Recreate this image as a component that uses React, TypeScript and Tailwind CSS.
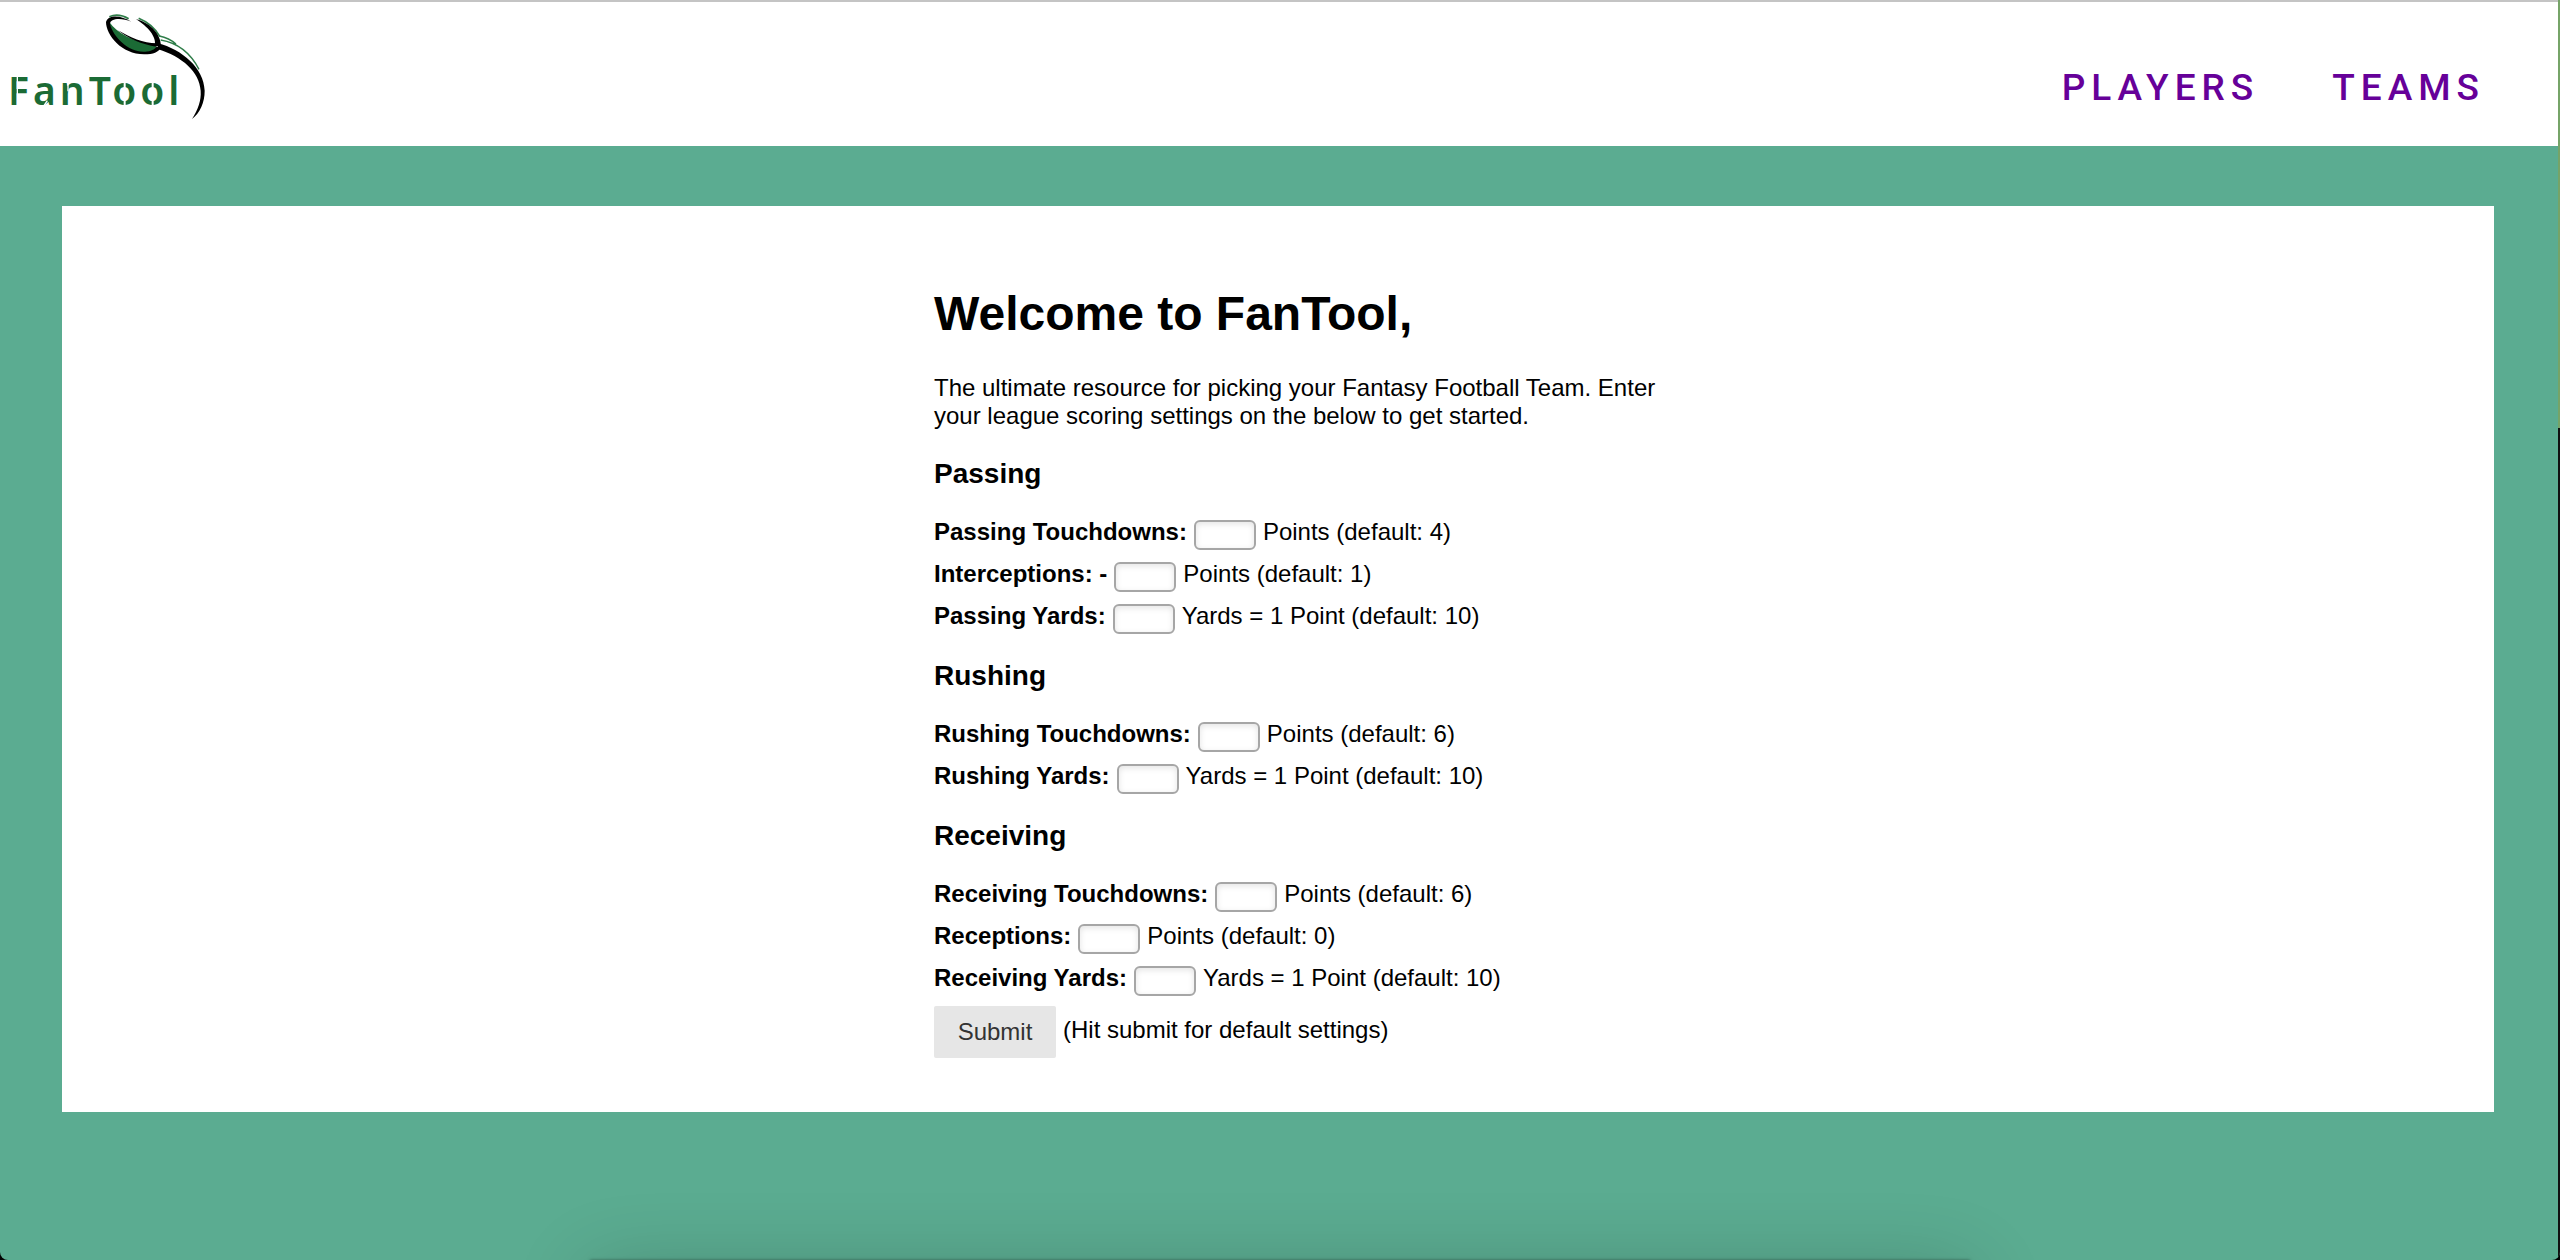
type Field = { id: string; label: string; hint: string };
type Section = { title: string; fields: Field[] };

const sections: Section[] = [
  {
    title: "Passing",
    fields: [
      { id: "passing-touchdowns", label: "Passing Touchdowns:", hint: "Points (default: 4)" },
      { id: "interceptions", label: "Interceptions: -", hint: "Points (default: 1)" },
      { id: "passing-yards", label: "Passing Yards:", hint: "Yards = 1 Point (default: 10)" },
    ],
  },
  {
    title: "Rushing",
    fields: [
      { id: "rushing-touchdowns", label: "Rushing Touchdowns:", hint: "Points (default: 6)" },
      { id: "rushing-yards", label: "Rushing Yards:", hint: "Yards = 1 Point (default: 10)" },
    ],
  },
  {
    title: "Receiving",
    fields: [
      { id: "receiving-touchdowns", label: "Receiving Touchdowns:", hint: "Points (default: 6)" },
      { id: "receptions", label: "Receptions:", hint: "Points (default: 0)" },
      { id: "receiving-yards", label: "Receiving Yards:", hint: "Yards = 1 Point (default: 10)" },
    ],
  },
];

function Logo() {
  return (
    <svg viewBox="0 0 720 438" className="h-[146px] w-[240px]" role="img" aria-label="FanTool">
      <text
        x="24"
        y="316"
        fill="#1b6b35"
        fontSize="117"
        fontWeight="600"
        letterSpacing="12"
        fontFamily="'Noto Sans', sans-serif"
      >
        FanTool
      </text>
      {/* stencil breaks */}
      <g stroke="#fff" strokeWidth="4">
        <path d="M52 225V325M204 248V274M106 276L130 268M130 320L142 302" />
        <path d="M374 245V325M458 245V325" strokeWidth="6" />
      </g>
      {/* spoon bowl */}
      <path d="M328 50C345 43 368 46 386 56" fill="none" stroke="#2f7d49" strokeWidth="5" />
      <path d="M416 55C448 68 466 86 480 110" fill="none" stroke="#2f7d49" strokeWidth="5" />
      <path
        d="M328 66C350 98 400 126 466 136L470 144C450 160 425 160 400 152C365 140 331 104 328 66Z"
        fill="#1b6b35"
      />
      <path d="M354 91C390 112 430 130 470 130L470 140C425 134 385 116 354 91Z" fill="#000" />
      <path
        d="M394 65C365 46 325 42 318 66C318 105 365 163 432 163C462 163 474 156 482 144L470 140C460 152 445 155 430 155C385 155 340 112 330 72C330 54 365 52 394 65Z"
        fill="#000"
      />
      <path d="M408 58C445 66 482 98 483 138L464 138C472 112 442 78 408 58Z" fill="#000" />
      {/* handle */}
      <path
        d="M474 130C545 148 612 204 614 272C614 308 600 338 576 357C594 328 604 302 602 272C598 216 548 170 472 147Z"
        fill="#000"
      />
      <path
        d="M478 108C498 112 512 118 528 132M482 120C530 128 570 156 597 208"
        fill="none"
        stroke="#2f7d49"
        strokeWidth="4"
      />
    </svg>
  );
}

export default function App() {
  return (
    <div className="min-h-screen bg-black">
      <div className="relative flex min-h-screen flex-col overflow-hidden rounded-b-lg bg-[#5bac91] font-['Liberation_Sans',Arial,sans-serif] text-2xl/7 text-black">
        <header className="flex h-[146px] items-start justify-between border-t-2 border-[#c4c4c4] bg-white">
          <a href="#home" className="-mt-0.5">
            <Logo />
          </a>
          <nav className="flex gap-[73px] pt-[62px] pr-[75px] font-['Roboto',sans-serif] text-[37px]/[48px] font-medium tracking-[6px] text-[#660099]">
            <a href="#players">PLAYERS</a>
            <a href="#teams">TEAMS</a>
          </nav>
        </header>

        <main className="mt-[60px] mr-[66px] ml-[62px] bg-white pt-20 pb-[54px] pl-[42px]">
          <form className="mx-auto max-w-[730px]">
            <h1 className="text-5xl/[56px] font-bold">Welcome to FanTool,</h1>
            <p className="mt-8 mb-7">
              The ultimate resource for picking your Fantasy Football Team. Enter your league scoring settings on the
              below to get started.
            </p>
            <div className="flex flex-col gap-4">
              {sections.map((section) => (
                <section key={section.title}>
                  <h3 className="mb-7 text-[28px]/8 font-bold">{section.title}</h3>
                  {section.fields.map((field) => (
                    <div key={field.id} className="flex h-[42px] items-start gap-[7px]">
                      <label htmlFor={field.id} className="font-bold">
                        {field.label}
                      </label>
                      <input
                        id={field.id}
                        type="text"
                        className="mt-0.5 h-[30px] w-[62px] rounded-md border-2 border-[#a6a6a6] bg-white px-1 shadow-[inset_0_2px_6px_#e4e4e4]"
                      />
                      <span>{field.hint}</span>
                    </div>
                  ))}
                </section>
              ))}
            </div>
            <div className="flex items-start gap-[7px]">
              <button type="button" className="h-[52px] w-[122px] rounded-xs bg-[#e6e6e6] text-[#333333]">
                Submit
              </button>
              <span className="mt-[10px]">(Hit submit for default settings)</span>
            </div>
          </form>
        </main>

        <div
          aria-hidden="true"
          className="absolute inset-x-[590px] -bottom-20 h-20 shadow-[0_10px_80px_rgba(0,0,0,0.2),0_0_3px_rgba(0,0,0,0.4)]"
        />
        <div aria-hidden="true" className="absolute inset-y-0 right-0 flex w-0.5 flex-col">
          <div className="h-[34%] bg-[#76a468]" />
          <div className="grow bg-[#101010]" />
        </div>
      </div>
    </div>
  );
}
